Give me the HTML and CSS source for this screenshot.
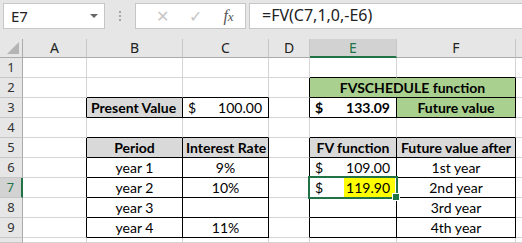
FILE: index.html
```html
<!DOCTYPE html>
<html lang="en">
<head>
    <meta charset="UTF-8">
    <title>FV function</title>
    <link rel="stylesheet" href="styles.css">
</head>
<body>
    <div class="topbar">
        <div class="name-box">
            <span>E7</span>
            <span class="drop"></span>
        </div>
        <div class="grip">
            <i></i><i></i><i></i>
        </div>
        <div class="fx-box">
            <span class="fx-btn cancel">✕</span>
            <span class="fx-btn enter">✓</span>
            <span class="fx-btn fx"><i>f</i><i>x</i></span>
        </div>
        <div class="formula">=FV(C7,1,0,-E6)</div>
    </div>

    <div class="sheet">
        <!-- column headers -->
        <div class="corner"><span class="tri"></span></div>
        <div class="ch">A</div>
        <div class="ch">B</div>
        <div class="ch">C</div>
        <div class="ch">D</div>
        <div class="ch sel">E</div>
        <div class="ch">F</div>
        <div class="ch edge"></div>

        <!-- row 1 -->
        <div class="rh">1</div>
        <div class="c"></div><div class="c"></div><div class="c"></div><div class="c"></div>
        <div class="c bb"></div><div class="c bb"></div><div class="c"></div>

        <!-- row 2 -->
        <div class="rh">2</div>
        <div class="c"></div><div class="c bb"></div><div class="c bb"></div><div class="c br"></div>
        <div class="c green bold center br bb span2">FVSCHEDULE function</div>
        <div class="c"></div>

        <!-- row 3 -->
        <div class="rh">3</div>
        <div class="c br"></div>
        <div class="c gray bold br bb label">Present Value</div>
        <div class="c acct br bb"><span>$</span><span>100.00</span></div>
        <div class="c br"></div>
        <div class="c acct bold br bb"><span>$</span><span>133.09</span></div>
        <div class="c green bold center br bb">Future value</div>
        <div class="c"></div>

        <!-- row 4 -->
        <div class="rh">4</div>
        <div class="c"></div><div class="c bb"></div><div class="c bb"></div><div class="c"></div>
        <div class="c bb"></div><div class="c bb"></div><div class="c"></div>

        <!-- row 5 -->
        <div class="rh">5</div>
        <div class="c br"></div>
        <div class="c gray bold center br bb">Period</div>
        <div class="c gray bold center br bb">Interest Rate</div>
        <div class="c br"></div>
        <div class="c gray bold center br bb">FV function</div>
        <div class="c gray bold center br bb">Future value after</div>
        <div class="c"></div>

        <!-- row 6 -->
        <div class="rh">6</div>
        <div class="c br"></div>
        <div class="c center br bb">year 1</div>
        <div class="c center br bb">9%</div>
        <div class="c br"></div>
        <div class="c acct br bb"><span>$</span><span>109.00</span></div>
        <div class="c center br bb">1st year</div>
        <div class="c"></div>

        <!-- row 7 -->
        <div class="rh active">7</div>
        <div class="c br"></div>
        <div class="c center br bb">year 2</div>
        <div class="c center br bb">10%</div>
        <div class="c br"></div>
        <div class="c acct br bb current"><span>$</span><span class="mark">119.90</span></div>
        <div class="c center br bb">2nd year</div>
        <div class="c"></div>

        <!-- row 8 -->
        <div class="rh">8</div>
        <div class="c br"></div>
        <div class="c center br bb">year 3</div>
        <div class="c center br bb"></div>
        <div class="c br"></div>
        <div class="c br bb"></div>
        <div class="c center br bb">3rd year</div>
        <div class="c"></div>

        <!-- row 9 -->
        <div class="rh">9</div>
        <div class="c br"></div>
        <div class="c center br bb">year 4</div>
        <div class="c center br bb">11%</div>
        <div class="c br"></div>
        <div class="c br bb"></div>
        <div class="c center br bb">4th year</div>
        <div class="c"></div>

        <!-- row 10, cut off by the window -->
        <div class="rh"></div>
        <div class="c"></div><div class="c"></div><div class="c"></div><div class="c"></div>
        <div class="c"></div><div class="c"></div><div class="c"></div>
    </div>
</body>
</html>
```

FILE: styles.css
```css
* {
    margin: 0;
    padding: 0;
    box-sizing: border-box;
}

body {
    width: 522px;
    height: 243px;
    overflow: hidden;
    background-color: #ffffff;
    font-family: 'Noto Sans', sans-serif;
}

/* formula bar */
.topbar {
    height: 39px;
    background-color: #e6e6e6;
    display: flex;
    align-items: flex-start;
    padding-top: 3px;
    padding-left: 3px;
}

.name-box {
    width: 102px;
    height: 26px;
    background-color: #fff;
    border: 1px solid #c6c6c6;
    display: flex;
    align-items: center;
    justify-content: space-between;
    padding: 0 6px 0 7px;
    font-size: 15px;
    color: #222;
}

.drop {
    width: 0;
    height: 0;
    border-left: 4px solid transparent;
    border-right: 4px solid transparent;
    border-top: 4px solid #666;
}

.grip {
    width: 30px;
    height: 26px;
    display: flex;
    flex-direction: column;
    align-items: center;
    justify-content: center;
    gap: 2px;
}

.grip i {
    width: 2px;
    height: 2px;
    background-color: #a6a6a6;
}

.fx-box {
    width: 111px;
    height: 26px;
    background-color: #fff;
    border: 1px solid #c6c6c6;
    display: flex;
    align-items: center;
    padding-left: 10px;
}

.fx-btn {
    width: 36px;
    text-align: center;
    color: #c6c6c6;
    font-size: 16px;
}

.fx {
    color: #555;
    font-family: 'Liberation Serif', serif;
    font-size: 16px;
}

.fx i:last-child {
    font-size: 13px;
}

.formula {
    flex: 1;
    height: 26px;
    margin-left: 3px;
    background-color: #fff;
    border: 1px solid #c6c6c6;
    border-right: none;
    padding-left: 12px;
    font-size: 16px;
    line-height: 23px;
    color: #222;
}

/* grid */
.sheet {
    display: grid;
    grid-template-columns: 23px 64px 96px 86px 41px 87px 119px 6px;
    grid-template-rows: 19px repeat(9, 20px) 5px;
    font-family: 'Lato', sans-serif;
    font-size: 14px;
    color: #000;
}

.corner {
    background-color: #e6e6e6;
    border-right: 1px solid #ababab;
    border-bottom: 1px solid #ababab;
    position: relative;
}

.tri {
    position: absolute;
    right: 3px;
    bottom: 3px;
    width: 0;
    height: 0;
    border-left: 12px solid transparent;
    border-bottom: 12px solid #b4b4b4;
}

.ch {
    background-color: #e6e6e6;
    border-right: 1px solid #c6c6c6;
    border-bottom: 1px solid #ababab;
    text-align: center;
    font-family: 'Noto Sans', sans-serif;
    font-size: 14px;
    line-height: 18px;
    color: #222;
}

.ch.sel {
    background-color: #d2d2d2;
    border-bottom: 2px solid #217346;
    color: #217346;
}

.ch.edge {
    border-right: none;
}

.rh {
    background-color: #e6e6e6;
    border-right: 1px solid #ababab;
    border-bottom: 1px solid #c6c6c6;
    text-align: center;
    font-family: 'Noto Sans', sans-serif;
    font-size: 13px;
    line-height: 19px;
    color: #333;
}

.rh.active {
    background-color: #d2d2d2;
    border-right: 2px solid #217346;
    color: #217346;
}

.c {
    border-right: 1px solid #d4d4d4;
    border-bottom: 1px solid #d4d4d4;
    line-height: 20px;
    padding: 0 3px;
    white-space: nowrap;
}

.br {
    border-right-color: #000;
}

.bb {
    border-bottom-color: #000;
}

.span2 {
    grid-column: span 2;
}

.bold {
    font-weight: bold;
}

.center {
    text-align: center;
}

.label {
    padding-left: 4px;
}

.gray {
    background-color: #d9d9d9;
}

.green {
    background-color: #a9d08e;
}

.acct {
    display: flex;
    justify-content: space-between;
    padding: 0 6px 0 5px;
}

.current {
    position: relative;
}

.current::before {
    content: '';
    position: absolute;
    left: -2px;
    top: -2px;
    right: -2px;
    bottom: -2px;
    border: 2px solid #217346;
}

.current::after {
    content: '';
    position: absolute;
    right: -4px;
    bottom: -4px;
    width: 6px;
    height: 6px;
    background-color: #217346;
    border: 1px solid #fff;
}

.mark {
    background-color: #ffff00;
    padding-left: 2px;
    margin-right: -5px;
    padding-right: 5px;
}
```
